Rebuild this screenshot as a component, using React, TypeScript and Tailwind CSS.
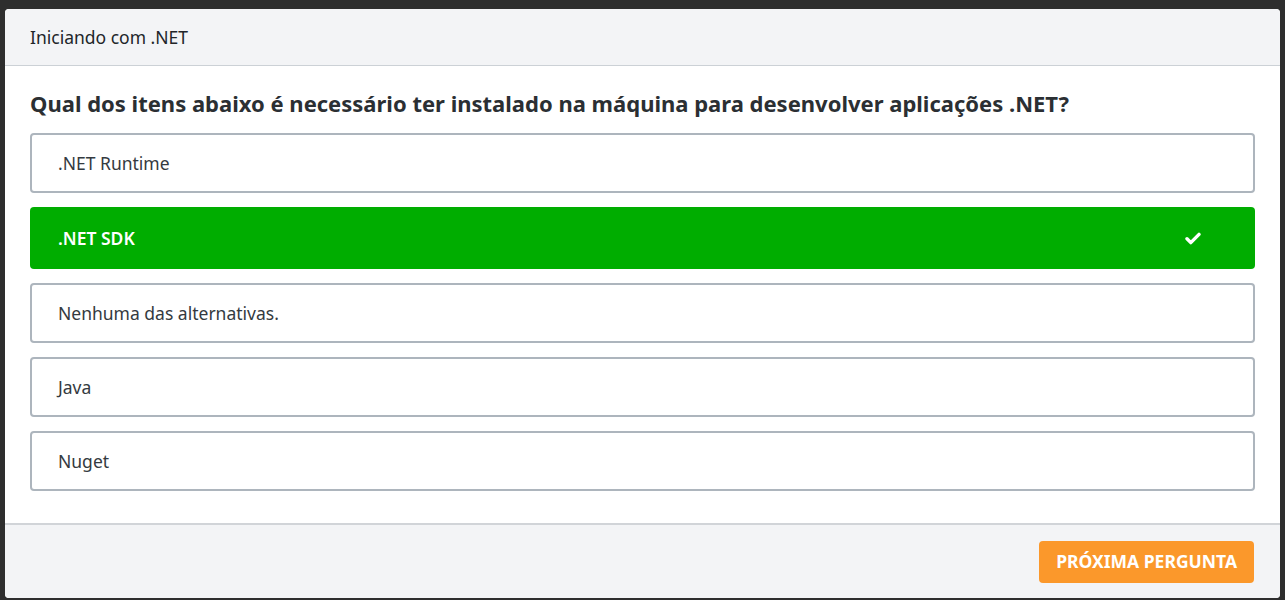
const options = [
  { label: ".NET Runtime", correct: false },
  { label: ".NET SDK", correct: true },
  { label: "Nenhuma das alternativas.", correct: false },
  { label: "Java", correct: false },
  { label: "Nuget", correct: false },
];

function CheckMark() {
  return (
    <svg width="16" height="13" viewBox="0 0 16 13" fill="none">
      <path d="M2 6.8l3.8 3.8L14 2.4" stroke="white" strokeWidth="3.4" strokeLinecap="round" strokeLinejoin="round" />
    </svg>
  );
}

export default function App() {
  return (
    <div className="min-h-screen bg-[#2e2e2e] pt-[9px] px-[5px] pb-[3px] font-['Noto_Sans',sans-serif]">
      <div className="bg-white rounded-[4px] overflow-hidden">
        <div className="h-[57px] bg-[#f3f4f6] border-b border-[#ccd1d6] flex items-center px-[25px] text-[17.5px] text-[#212529]">
          Iniciando com .NET
        </div>

        <div className="px-[25px] pt-[23px] pb-[32px]">
          <h2 className="text-[22px] leading-[28px] font-bold text-[#2b2f33] mb-[16px]">
            Qual dos itens abaixo é necessário ter instalado na máquina para desenvolver aplicações .NET?
          </h2>
          <div className="flex flex-col gap-[14px]">
            {options.map((opt) =>
              opt.correct ? (
                <div
                  key={opt.label}
                  className="h-[62px] rounded-[4px] bg-[#00ad00] flex items-center justify-between pl-[28px] pr-[54px] text-white text-[17.5px] font-semibold"
                >
                  <span>{opt.label}</span>
                  <CheckMark />
                </div>
              ) : (
                <div
                  key={opt.label}
                  className="h-[60px] rounded-[4px] border-2 border-[#adb5bd] flex items-center pl-[26px] text-[17.5px] text-[#343a40]"
                >
                  {opt.label}
                </div>
              )
            )}
          </div>
        </div>

        <div className="h-[75px] bg-[#f3f4f6] border-t-2 border-[#d1d4d8] flex items-center justify-end px-[26px]">
          <button className="h-[42px] px-[17px] rounded-[4px] bg-[#fb982b] text-white text-[17.5px] font-bold uppercase">
            Próxima pergunta
          </button>
        </div>
      </div>
    </div>
  );
}
